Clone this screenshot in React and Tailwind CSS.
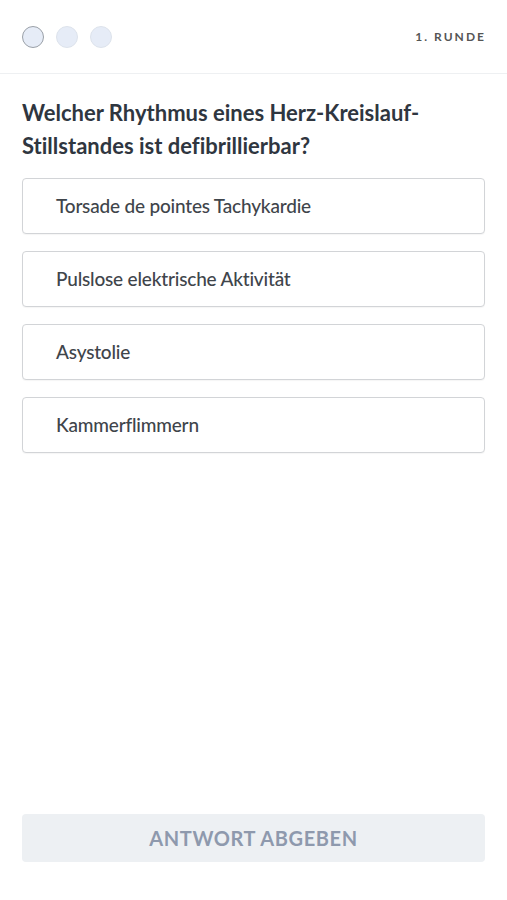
import React from "react";

const options = [
  "Torsade de pointes Tachykardie",
  "Pulslose elektrische Aktivität",
  "Asystolie",
  "Kammerflimmern",
];

export default function App() {
  return (
    <div className="w-[507px] h-[900px] bg-white flex flex-col font-['Lato','Liberation_Sans',sans-serif] [font-variant-ligatures:none]">
      <div className="h-[74px] flex items-center justify-between pl-[22px] pr-[22px] border-b border-[#eef0f2]">
        <div className="flex items-center gap-[12px]">
          <div className="w-[22px] h-[22px] rounded-full bg-[#e6ecf7] border-[1.5px] border-[#9aa0a8]" />
          <div className="w-[22px] h-[22px] rounded-full bg-[#e6ecf7] border border-[#dde3ec]" />
          <div className="w-[22px] h-[22px] rounded-full bg-[#e6ecf7] border border-[#dde3ec]" />
        </div>
        <div className="text-[12px] font-bold tracking-[0.17em] text-[#555] mr-[-1px]">1. RUNDE</div>
      </div>
      <div className="px-[22px] flex flex-col flex-1">
        <h1 className="mt-[22px] text-[22px] leading-[33px] font-bold text-[#2f3640]">
          Welcher Rhythmus eines Herz-Kreislauf-Stillstandes ist defibrillierbar?
        </h1>
        <div className="mt-[16px] flex flex-col gap-[17px] w-[463px]">
          {options.map((o) => (
            <div
              key={o}
              className="h-[56px] flex items-center pl-[33px] rounded-[4px] border border-[#d2d4d7] bg-white text-[19px] font-medium tracking-[-0.01em] text-[#3f454b] shadow-[0_1px_1px_rgba(0,0,0,0.04)]"
            >
              {o}
            </div>
          ))}
        </div>
        <div className="flex-1" />
        <div className="mb-[38px] w-[463px] h-[48px] rounded-[4px] bg-[#edf0f3] flex items-center justify-center text-[20px] font-bold tracking-[0.03em] text-[#8e99ad]">
          ANTWORT ABGEBEN
        </div>
      </div>
    </div>
  );
}
